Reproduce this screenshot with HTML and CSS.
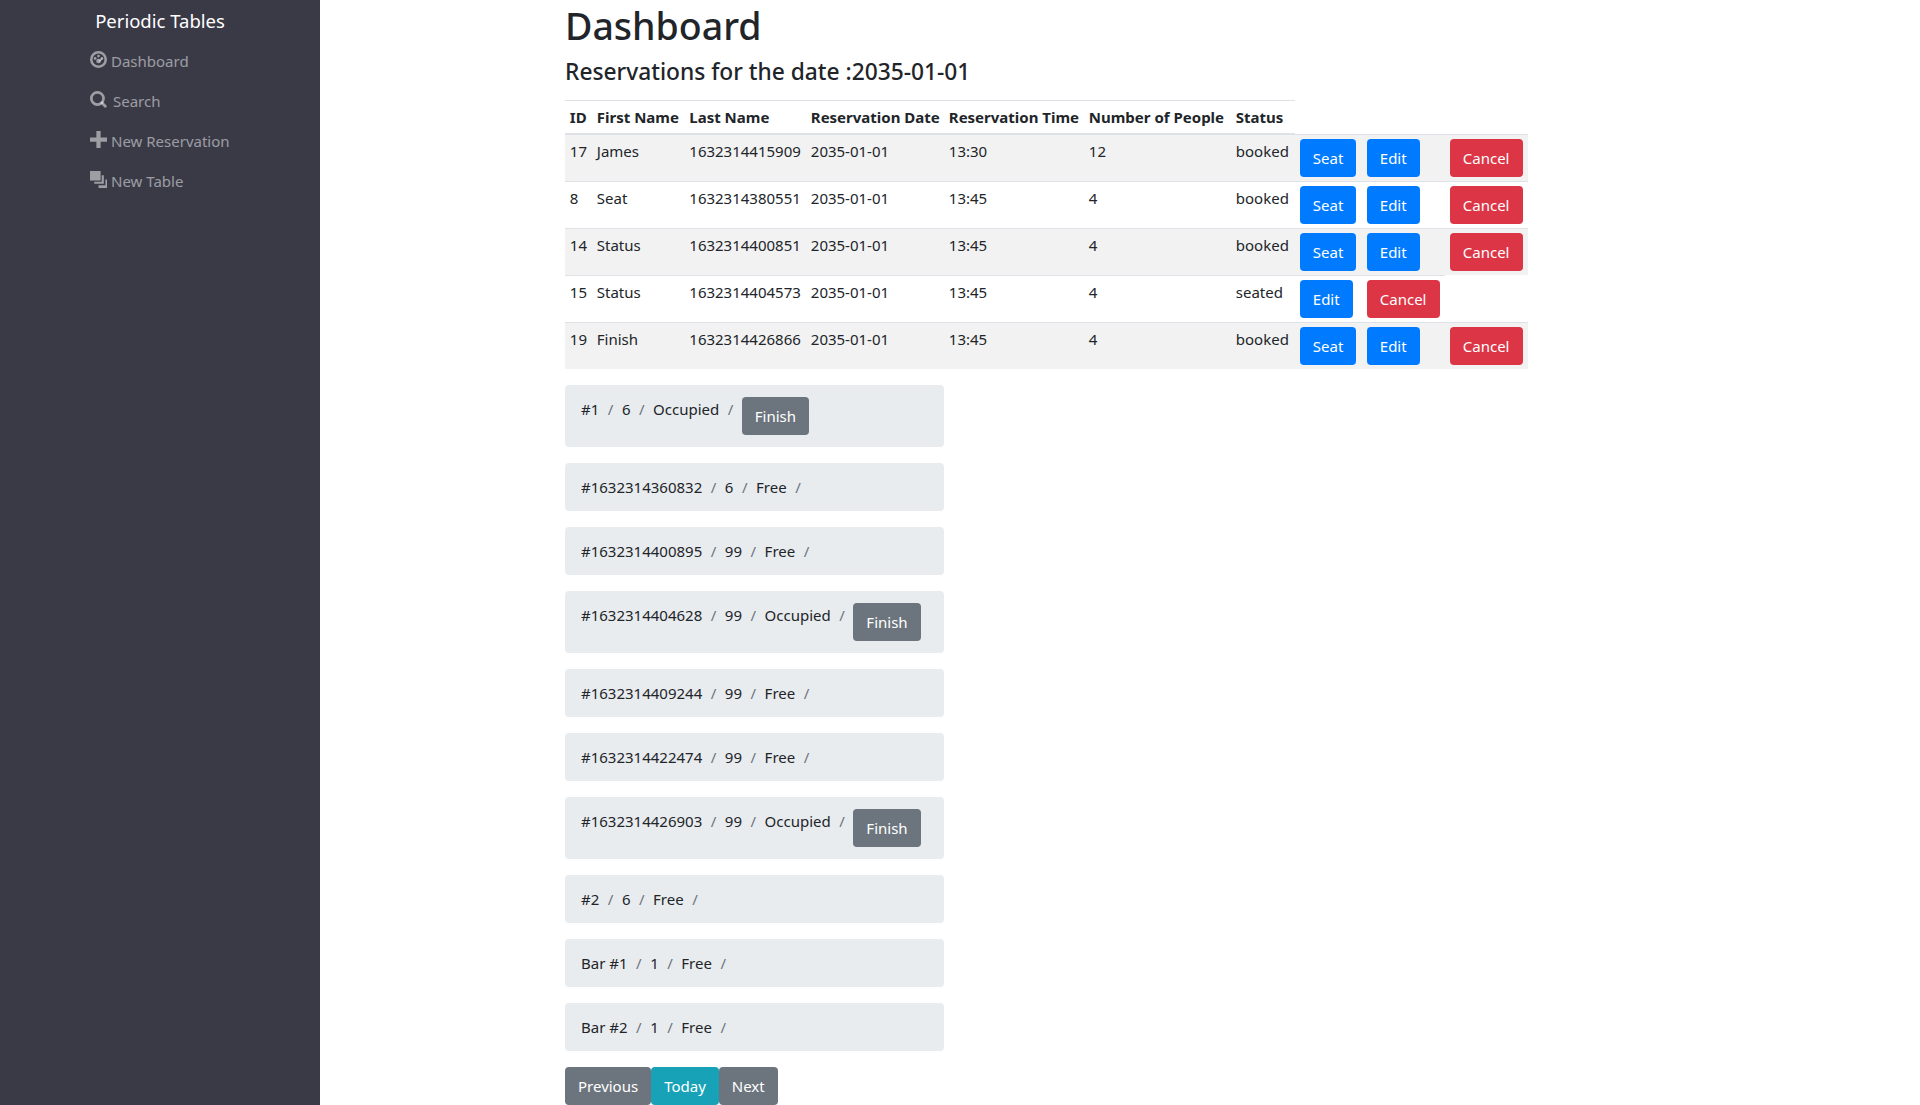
FILE: index.html
```html
<!DOCTYPE html>
<html lang="en">

<head>
  <meta charset="UTF-8">
  <meta name="viewport" content="width=device-width, initial-scale=1.0">
  <title>Periodic Tables</title>

  <link rel="stylesheet" href="styles.css">
</head>

<body>
  <div class="layout">

    <nav class="sidebar">
      <div class="brand">Periodic Tables</div>
      <ul class="navlist">
        <li><a class="navlink" href="#">
          <svg class="icon" viewBox="0 0 16 16"><path fill-rule="evenodd" d="M8 0a8 8 0 1 0 0 16A8 8 0 0 0 8 0zm0 2.400a5.600 5.600 0 1 1 0 11.200A5.600 5.600 0 0 1 8 2.400z"/><circle cx="8" cy="4.800" r="1.300"/><circle cx="4.800" cy="7" r="1.300"/><circle cx="11.200" cy="7" r="1.300"/><circle cx="8" cy="9.400" r="2.200"/><path d="M8 9l3.400-2.400.6.800L9.200 10.600z"/></svg>
          Dashboard</a></li>
        <li><a class="navlink" href="#">
          <svg class="icon" viewBox="0 0 16 16"><path fill-rule="evenodd" d="M7 0a7 7 0 1 0 0 14A7 7 0 0 0 7 0zm0 2.500a4.500 4.500 0 1 1 0 9 4.500 4.500 0 0 1 0-9z"/><path d="M11.400 9.500l4.200 4.200a1.400 1.400 0 0 1-1.900 1.900l-4.200-4.200z"/></svg>
          <span class="searchlabel">Search</span></a></li>
        <li><a class="navlink" href="#">
          <svg class="icon" viewBox="0 0 16 16"><path d="M6 0h4v6h6v4h-6v6H6v-6H0V6h6z"/></svg>
          New Reservation</a></li>
        <li><a class="navlink" href="#">
          <svg class="icon" viewBox="0 0 16 16"><path d="M0 0h10v9H0z"/><path d="M11 4h2v8H4v-2h7z"/><path d="M14.500 8H16v8H8v-2.500h6.500z"/></svg>
          New Table</a></li>
      </ul>
    </nav>

    <main class="content">
      <h1>Dashboard</h1>
      <h4>Reservations for the date :2035-01-01</h4>

      <table class="restable">
        <colgroup>
          <col class="col-id"><col class="col-first"><col class="col-last"><col class="col-date"><col class="col-time"><col class="col-people"><col class="col-status"><col class="col-a1"><col class="col-a2"><col class="col-a3">
        </colgroup>
        <thead>
          <tr>
            <th>ID</th><th>First Name</th><th>Last Name</th><th>Reservation Date</th><th>Reservation Time</th><th>Number of People</th><th>Status</th>
          </tr>
        </thead>
        <tbody>
          <tr>
            <td>17</td><td>James</td><td>1632314415909</td><td>2035-01-01</td><td>13:30</td><td>12</td><td>booked</td>
            <td><button class="btn blue">Seat</button></td><td><button class="btn blue">Edit</button></td><td><button class="btn red">Cancel</button></td>
          </tr>
          <tr>
            <td>8</td><td>Seat</td><td>1632314380551</td><td>2035-01-01</td><td>13:45</td><td>4</td><td>booked</td>
            <td><button class="btn blue">Seat</button></td><td><button class="btn blue">Edit</button></td><td><button class="btn red">Cancel</button></td>
          </tr>
          <tr>
            <td>14</td><td>Status</td><td>1632314400851</td><td>2035-01-01</td><td>13:45</td><td>4</td><td>booked</td>
            <td><button class="btn blue">Seat</button></td><td><button class="btn blue">Edit</button></td><td><button class="btn red">Cancel</button></td>
          </tr>
          <tr>
            <td>15</td><td>Status</td><td>1632314404573</td><td>2035-01-01</td><td>13:45</td><td>4</td><td>seated</td>
            <td><button class="btn blue">Edit</button></td><td><button class="btn red">Cancel</button></td>
          </tr>
          <tr>
            <td>19</td><td>Finish</td><td>1632314426866</td><td>2035-01-01</td><td>13:45</td><td>4</td><td>booked</td>
            <td><button class="btn blue">Seat</button></td><td><button class="btn blue">Edit</button></td><td><button class="btn red">Cancel</button></td>
          </tr>
        </tbody>
      </table>

      <section class="tablelist">
        <ol class="crumb"><li>#1</li><li>6</li><li>Occupied</li><li><button class="btn grey">Finish</button></li></ol>
        <ol class="crumb"><li>#1632314360832</li><li>6</li><li>Free</li><li></li></ol>
        <ol class="crumb"><li>#1632314400895</li><li>99</li><li>Free</li><li></li></ol>
        <ol class="crumb"><li>#1632314404628</li><li>99</li><li>Occupied</li><li><button class="btn grey">Finish</button></li></ol>
        <ol class="crumb"><li>#1632314409244</li><li>99</li><li>Free</li><li></li></ol>
        <ol class="crumb"><li>#1632314422474</li><li>99</li><li>Free</li><li></li></ol>
        <ol class="crumb"><li>#1632314426903</li><li>99</li><li>Occupied</li><li><button class="btn grey">Finish</button></li></ol>
        <ol class="crumb"><li>#2</li><li>6</li><li>Free</li><li></li></ol>
        <ol class="crumb"><li>Bar #1</li><li>1</li><li>Free</li><li></li></ol>
        <ol class="crumb"><li>Bar #2</li><li>1</li><li>Free</li><li></li></ol>
      </section>

      <div class="datenav">
        <button class="btn grey">Previous</button><button class="btn teal">Today</button><button class="btn grey">Next</button>
      </div>
    </main>

  </div>
</body>

</html>
```

FILE: styles.css
```css
* {
  box-sizing: border-box;
}

body {
  margin: 0;
  font-family: "Noto Sans", "Open Sans", sans-serif;
  font-size: 15px;
  line-height: 24px;
  color: #212529;
  background: #fff;
  overflow: hidden;
}

.layout {
  display: flex;
  height: 1105px;
}

.sidebar {
  flex: 0 0 320px;
  background: #3a3a47;
}

.brand {
  margin-top: 9px;
  text-align: center;
  color: #fff;
  font-size: 18.500px;
  line-height: 24px;
}

.navlist {
  list-style: none;
  margin: 8px 0 0;
  padding: 0 0 0 90px;
}

.navlist li {
  height: 40px;
}

.navlink {
  display: flex;
  align-items: center;
  height: 40px;
  gap: 4px;
  color: rgba(255, 255, 255, 0.5);
  text-decoration: none;
}

.icon {
  width: 17px;
  height: 17px;
  fill: currentColor;
  margin-top: -3px;
}

.searchlabel {
  margin-left: 2px;
}

.content {
  flex: 1;
  padding-left: 245px;
}

h1 {
  margin: 0;
  font-size: 37.500px;
  font-weight: 500;
  line-height: 48px;
  height: 52px;
  padding-top: 2px;
}

h4 {
  margin: 0;
  font-size: 22.750px;
  font-weight: 500;
  line-height: 29px;
  height: 48px;
  padding-top: 5px;
}

.restable {
  table-layout: fixed;
  width: 963px;
  border-collapse: collapse;
  margin-bottom: 16px;
}

.col-id { width: 27px; }
.col-first { width: 92.500px; }
.col-last { width: 121.500px; }
.col-date { width: 138px; }
.col-time { width: 140px; }
.col-people { width: 147px; }
.col-status { width: 64px; }
.col-a1 { width: 67px; }
.col-a2 { width: 83px; }
.col-a3 { width: 83px; }

.restable th,
.restable td {
  padding: 4px 4.800px;
  border-top: 1px solid #dee2e6;
  text-align: left;
  vertical-align: top;
  white-space: nowrap;
}

.restable th {
  border-bottom: 2px solid #dee2e6;
  font-weight: 700;
  vertical-align: bottom;
}

.restable tbody tr:nth-child(odd) {
  background: #f2f2f2;
}

.btn {
  display: block;
  height: 38px;
  padding: 0 12px;
  border: 1px solid transparent;
  border-radius: 4px;
  font: inherit;
  color: #fff;
}

.blue { background: #007bff; }
.red { background: #dc3545; }
.grey { background: #6c757d; }
.teal { background: #17a2b8; }

.tablelist {
  width: 379px;
}

.crumb {
  display: flex;
  flex-wrap: wrap;
  list-style: none;
  margin: 0 0 16px;
  padding: 12px 16px;
  background: #e9ecef;
  border-radius: 4px;
}

.crumb li {
  display: flex;
  min-height: 24px;
}

.crumb li + li {
  padding-left: 8.500px;
}

.crumb li + li::before {
  content: "/";
  padding-right: 8.500px;
  color: #6c757d;
}

.datenav {
  display: flex;
}
```
